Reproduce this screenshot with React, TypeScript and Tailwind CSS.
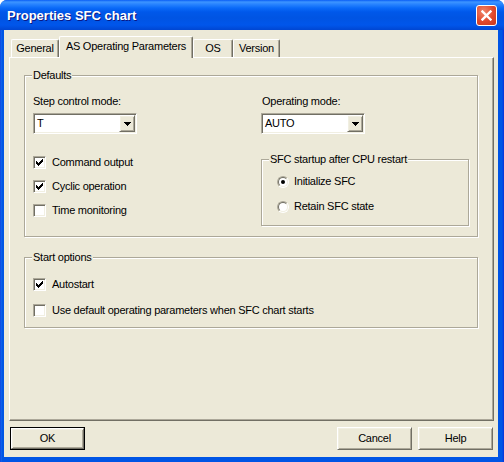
import React from "react";

const raised =
  "border border-t-white border-l-white border-b-[#716f64] border-r-[#716f64] shadow-[inset_1px_1px_0_#f1efe2,inset_-1px_-1px_0_#aca899]";
const sunken =
  "border border-t-[#aca899] border-l-[#aca899] border-b-white border-r-white shadow-[inset_1px_1px_0_#716f64,inset_-1px_-1px_0_#f1efe2]";

// classic 7x7 check glyph, 3px tall per column
const checkCols = [2, 3, 4, 3, 2, 1, 0];

function Check({ checked, label }: { checked?: boolean; label: string }) {
  return (
    <div className="flex items-center h-[13px]">
      <div className={`w-[13px] h-[13px] bg-white flex items-center justify-center ${sunken}`}>
        {checked && (
          <svg width="7" height="7" viewBox="0 0 7 7">
            <path d={checkCols.map((y, x) => `M${x} ${y}h1v3h-1z`).join(" ")} fill="#000" />
          </svg>
        )}
      </div>
      <span className="ml-[6px] leading-[13px]">{label}</span>
    </div>
  );
}

function Radio({ checked, label }: { checked?: boolean; label: string }) {
  return (
    <div className="flex items-center h-[13px]">
      <div className="w-[12px] h-[12px] rounded-full border border-t-[#aca899] border-l-[#aca899] border-b-white border-r-white">
        <div className="w-full h-full rounded-full border border-t-[#716f64] border-l-[#716f64] border-b-[#f1efe2] border-r-[#f1efe2] bg-white flex items-center justify-center">
          {checked && <div className="w-[4px] h-[4px] rounded-full bg-black" />}
        </div>
      </div>
      <span className="ml-[5px] leading-[13px]">{label}</span>
    </div>
  );
}

function Combo({ value }: { value: string }) {
  return (
    <div className={`w-[104px] h-[21px] bg-white flex items-center p-[1px] ${sunken}`}>
      <span className="flex-1 pl-[2px] leading-[13px]">{value}</span>
      <div className={`w-[16px] h-[17px] bg-[#ece9d8] flex items-center justify-center ${raised}`}>
        <svg width="7" height="4" viewBox="0 0 7 4">
          <path d="M0 0h7v1H0zM1 1h5v1H1zM2 2h3v1H2zM3 3h1v1H3z" fill="#000" />
        </svg>
      </div>
    </div>
  );
}

function Group({ label, className, children }: { label: string; className: string; children?: React.ReactNode }) {
  return (
    <div className={`relative border border-[#aca899] shadow-[inset_1px_1px_0_#fff,1px_1px_0_#fff] ${className}`}>
      <span className="absolute -top-[7px] left-[7px] px-[1px] bg-[#ece9d8] leading-[13px]">{label}</span>
      {children}
    </div>
  );
}

function Button({ label, isDefault }: { label: string; isDefault?: boolean }) {
  return (
    <div className={`w-[75px] h-[23px] ${isDefault ? "border border-black" : ""}`}>
      <div className={`w-full h-full flex items-center justify-center ${raised}`}>{label}</div>
    </div>
  );
}

function Tab({ label, width, active }: { label: string; width: number; active?: boolean }) {
  return (
    <div
      style={{ width }}
      className={`flex items-center justify-center rounded-t-[2px] border-t border-l border-t-white border-l-white border-r border-r-[#716f64] shadow-[inset_-1px_0_0_#aca899] bg-[#ece9d8] ${
        active ? "h-[22px] -mb-[1px] relative z-10 pb-[3px]" : "h-[18px]"
      }`}
    >
      {label}
    </div>
  );
}

export default function App() {
  return (
    <div className="w-[504px] h-[462px] flex flex-col bg-[#0054e3] rounded-t-[7px] font-['Liberation_Sans',Arial,sans-serif] text-[11px] tracking-[-0.25px] text-black">
      <div className="h-[30px] shrink-0 flex items-center pl-[7px] pr-[7px] rounded-t-[7px] bg-[linear-gradient(to_bottom,#0a5ef5_0px,#3d95ff_2px,#2a85ff_4px,#0a6af8_8px,#0058ea_12px,#0054e3_18px,#0056eb_25px,#0046d2_30px)]">
        <span className="flex-1 pt-[2px] text-white font-bold text-[13px] tracking-normal [text-shadow:1px_1px_0_#0a1883]">Properties SFC chart</span>
        <div className="w-[21px] h-[21px] rounded-[3px] border border-white bg-[radial-gradient(circle_at_35%_30%,#f0866a,#e0482c_55%,#c8381c)] flex items-center justify-center">
          <svg width="11" height="11" viewBox="0 0 11 11">
            <path d="M1.5 1.5l8 8M9.5 1.5l-8 8" stroke="#fff" strokeWidth="2.4" strokeLinecap="square" />
          </svg>
        </div>
      </div>
      <div className="flex-1 flex pl-[4px] pr-[6px] pb-[5px] bg-[linear-gradient(to_right,#0831d9_0,#166aee_1px,#0055e5_2px,#0055e5_calc(100%-2px),#0831d9_100%)]">
        <div className="flex-1 flex flex-col bg-[#ece9d8]">
          <div className="flex items-end h-[27px] pl-[7px]">
            <Tab label="General" width={48} />
            <Tab label="AS Operating Parameters" width={134} active />
            <Tab label="OS" width={40} />
            <Tab label="Version" width={47} />
          </div>
          <div className="ml-[5px] w-[485px] h-[364px] border-t border-l border-t-white border-l-white border-r border-b border-r-[#716f64] border-b-[#716f64] shadow-[inset_-1px_-1px_0_#aca899] pl-[14px] pt-[17px]">
            <Group label="Defaults" className="w-[454px] h-[162px]">
              <div className="flex pl-[8px] pt-[19px]">
                <div className="w-[228px] flex flex-col">
                  <span className="leading-[13px] h-[13px]">Step control mode:</span>
                  <div className="mt-[5px]">
                    <Combo value="T" />
                  </div>
                  <div className="flex flex-col gap-[11px] mt-[22px]">
                    <Check checked label="Command output" />
                    <Check checked label="Cyclic operation" />
                    <Check label="Time monitoring" />
                  </div>
                </div>
                <div className="flex flex-col">
                  <span className="leading-[13px] h-[13px] pl-[1px]">Operating mode:</span>
                  <div className="mt-[5px]">
                    <Combo value="AUTO" />
                  </div>
                  <Group label="SFC startup after CPU restart" className="mt-[25px] w-[208px] h-[67px]">
                    <div className="flex flex-col gap-[12px] pl-[15px] pt-[15px]">
                      <Radio checked label="Initialize SFC" />
                      <Radio label="Retain SFC state" />
                    </div>
                  </Group>
                </div>
              </div>
            </Group>
            <Group label="Start options" className="mt-[20px] w-[454px] h-[71px]">
              <div className="flex flex-col gap-[13px] pl-[8px] pt-[20px]">
                <Check checked label="Autostart" />
                <Check label="Use default operating parameters when SFC chart starts" />
              </div>
            </Group>
          </div>
          <div className="flex mt-[6px] pl-[6px] pr-[5px]">
            <Button label="OK" isDefault />
            <div className="flex-1" />
            <Button label="Cancel" />
            <div className="w-[6px]" />
            <Button label="Help" />
          </div>
        </div>
      </div>
    </div>
  );
}
